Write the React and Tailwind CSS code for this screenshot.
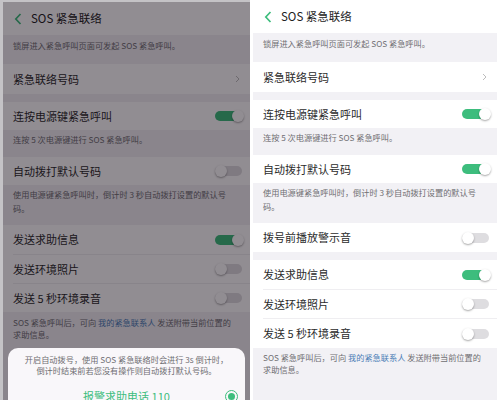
const FONT = { fontFamily: '"Noto Sans CJK SC", "Noto Sans", sans-serif' };

const Toggle = ({ on }) => (
  <div className="relative w-[29px] h-[14px] flex items-center">
    <div
      className={`w-[27px] h-[10px] rounded-full ${
        on ? "bg-[#3dbd7d]" : "bg-[#dedde0]"
      }`}
    />
    <div
      className={`absolute top-px w-[12px] h-[12px] rounded-full bg-white shadow-[0_1px_2px_rgba(0,0,0,0.35)] ${
        on ? "right-0" : "left-0"
      }`}
    />
  </div>
);

const Back = () => (
  <svg width="8" height="12" viewBox="0 0 8 12">
    <path d="M6.5 1 L1.8 6 L6.5 11" fill="none" stroke="#3dbd7d" strokeWidth="1.7" />
  </svg>
);

const Chevron = () => (
  <svg width="5" height="8" viewBox="0 0 5 8">
    <path d="M1 1 L4 4 L1 7" fill="none" stroke="#b5b5b5" strokeWidth="0.9" />
  </svg>
);

const Header = () => (
  <div className="h-[33px] flex items-center pl-[11px] bg-white">
    <Back />
    <span className="ml-[9px] text-[11.5px] text-[#222]">SOS 紧急联络</span>
  </div>
);

const Desc = ({ h, pt, children }) => (
  <div
    className="bg-[#f2f1f5] px-[10px] text-[8.2px] leading-[12.5px] text-[#6f6e72]"
    style={{ height: h, paddingTop: pt }}
  >
    {children}
  </div>
);

const Row = ({ h, label, right, line }) => (
  <div className="bg-white pl-[10px]" style={{ height: h }}>
    <div
      className={`h-full flex items-center justify-between pr-[6px] ${
        line ? "border-b border-[#efeef1]" : ""
      }`}
    >
      <span className="text-[11px] text-[#2b2b2b]">{label}</span>
      {right}
    </div>
  </div>
);

const Gap = () => <div className="h-[8px] bg-[#f2f1f5]" />;

const Top = ({ autoOn }) => (
  <>
    <Header />
    <Desc h={29} pt={4}>
      锁屏进入紧急呼叫页面可发起 SOS 紧急呼叫。
    </Desc>
    <Row
      h={30}
      label="紧急联络号码"
      right={
        <div className="pr-[4px] flex">
          <Chevron />
        </div>
      }
    />
    <Gap />
    <Row h={28} label="连按电源键紧急呼叫" right={<Toggle on />} />
    <Desc h={27} pt={3}>
      连按 5 次电源键进行 SOS 紧急呼叫。
    </Desc>
    <Row h={28} label="自动拨打默认号码" right={<Toggle on={autoOn} />} />
    <div className="bg-[#f2f1f5] h-[40px] pt-[2px] px-[10px] text-[8.2px] leading-[14px] text-[#6f6e72]">
      使用电源键紧急呼叫时，倒计时 3 秒自动拨打设置的默认号
      <br />
      码。
    </div>
  </>
);

const BottomDesc = ({ pt }) => (
  <div
    className="bg-[#f2f1f5] flex-1 px-[10px] text-[8.2px] leading-[12px] text-[#6f6e72]"
    style={{ paddingTop: pt }}
  >
    SOS 紧急呼叫后，可向 <span className="text-[#4a7db5]">我的紧急联系人</span>{" "}
    发送附带当前位置的
    <br />
    求助信息。
  </div>
);

const App = () => {
  return (
    <div className="w-[503px] h-[400px] flex overflow-hidden bg-white" style={FONT}>
      <div className="w-[250px] h-full border-l-[3px] border-t-[2px] border-[#c4c3c6] flex">
        <div className="relative flex-1 flex flex-col bg-white overflow-hidden">
          <Top autoOn={false} />
          <Row h={30} label="发送求助信息" right={<Toggle on />} line />
          <Row h={29} label="发送环境照片" right={<Toggle />} line />
          <Row h={28} label="发送 5 秒环境录音" right={<Toggle />} />
          <BottomDesc pt={4} />

          <div className="absolute inset-0 bg-[rgba(10,2,14,0.45)]" />

          <div className="absolute left-[5px] right-[5px] top-[346px] h-[60px] bg-[#f9f7fa] rounded-t-[10px] flex flex-col items-center pt-[6px]">
            <div className="text-[8.2px] leading-[11px] text-[#6f6e72] text-center">
              开启自动拨号，使用 SOS 紧急联络时会进行 3s 倒计时，
              <br />
              倒计时结束前若您没有操作则自动拨打默认号码。
            </div>
            <div className="w-full flex items-center justify-center mt-[12px] relative">
              <span className="text-[11px] text-[#3dbd7d]">报警求助电话 110</span>
              <div className="absolute right-[7px] w-[13px] h-[13px] rounded-full border-[1.5px] border-[#3dbd7d] flex items-center justify-center">
                <div className="w-[7px] h-[7px] rounded-full bg-[#3dbd7d]" />
              </div>
            </div>
          </div>
        </div>
      </div>

      <div className="w-[253px] h-full pl-[3px] pr-[6px] bg-white flex flex-col">
        <Top autoOn />
        <Row h={29} label="拨号前播放警示音" right={<Toggle />} />
        <Gap />
        <Row h={30} label="发送求助信息" right={<Toggle on />} line />
        <Row h={29} label="发送环境照片" right={<Toggle />} line />
        <Row h={29} label="发送 5 秒环境录音" right={<Toggle />} />
        <BottomDesc pt={3} />
      </div>
    </div>
  );
};

export default App;
